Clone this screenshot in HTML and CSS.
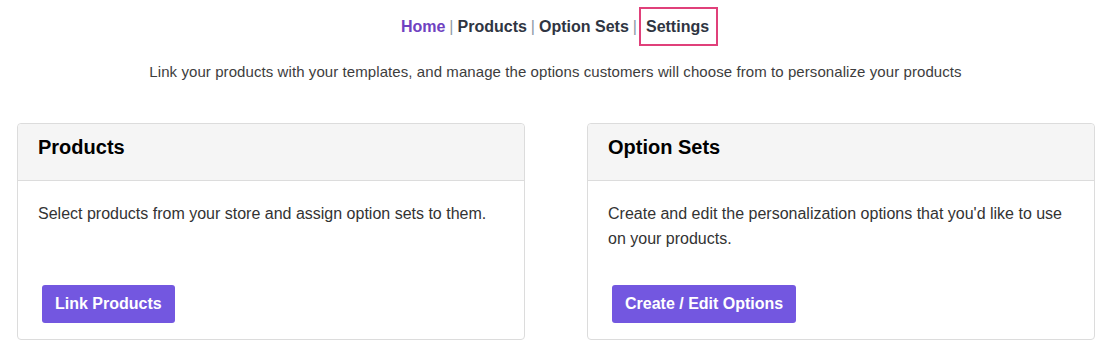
FILE: index.html
```html
<!DOCTYPE html>
<html lang="en">
<head>
  <meta charset="UTF-8">
  <meta name="viewport" content="width=device-width, initial-scale=1.0">
  <title>Personalizer Dashboard</title>
  <link rel="stylesheet" href="styles.css">
</head>
<body>
  <nav class="top-nav">
    <a href="#" class="nav-link active">Home</a>
    <span class="sep">|</span>
    <a href="#" class="nav-link">Products</a>
    <span class="sep">|</span>
    <a href="#" class="nav-link">Option Sets</a>
    <span class="sep">|</span>
    <a href="#" class="nav-link focused">Settings</a>
  </nav>

  <p class="intro">Link your products with your templates, and manage the options customers will choose from to personalize your products</p>

  <div class="card-grid">
    <div class="card">
      <div class="card-header">Products</div>
      <div class="card-body">
        <p>Select products from your store and assign option sets to them.</p>
        <button class="btn">Link Products</button>
      </div>
    </div>
    <div class="card">
      <div class="card-header">Option Sets</div>
      <div class="card-body">
        <p>Create and edit the personalization options that you'd like to use on your products.</p>
        <button class="btn">Create / Edit Options</button>
      </div>
    </div>
  </div>
</body>
</html>
```

FILE: styles.css
```css
* { box-sizing: border-box; margin: 0; padding: 0; }
body {
  font-family: 'Liberation Sans', Arial, sans-serif;
  background: #fff;
  color: #333;
  padding: 8px 15px 0 17px;
}
.top-nav {
  display: flex;
  justify-content: center;
  align-items: center;
  font-size: 16px;
  font-weight: bold;
  height: 37px;
  padding-left: 8px;
}
.nav-link {
  color: #2f3542;
  text-decoration: none;
  padding-top: 1px;
}
.nav-link.active {
  color: #6f42c1;
}
.nav-link.focused {
  border: 2px solid #e0407a;
  padding: 9px 7px 8px 5px;
  margin-left: -2px;
}
.sep {
  color: #8d9aa6;
  font-weight: normal;
  margin: 0 4px;
  padding-top: 1px;
}
.intro {
  text-align: center;
  font-size: 15px;
  letter-spacing: 0.08px;
  color: #3d3d3d;
  margin-top: 18px;
  margin-bottom: 43px;
}
.card-grid {
  display: grid;
  grid-template-columns: 508px 508px;
  gap: 62px;
}
.card {
  border: 1px solid #dcdcdc;
  border-radius: 4px;
  height: 217px;
  display: flex;
  flex-direction: column;
}
.card-header {
  background: #f5f5f5;
  border-bottom: 1px solid #dcdcdc;
  border-radius: 4px 4px 0 0;
  height: 57px;
  padding: 12px 20px 0;
  font-size: 20px;
  font-weight: bold;
  color: #000;
}
.card-body {
  padding: 20px 20px 0;
  display: flex;
  flex-direction: column;
  align-items: flex-start;
  flex: 1;
}
.card-body p {
  font-size: 16px;
  line-height: 25px;
  color: #333;
  min-height: 84px;
}
.btn {
  background-color: #7357e0;
  color: #fff;
  border: none;
  border-radius: 3px;
  font-family: 'Liberation Sans', Arial, sans-serif;
  font-size: 16px;
  font-weight: bold;
  padding: 10px 13px;
  margin-left: 4px;
  cursor: pointer;
}
```
